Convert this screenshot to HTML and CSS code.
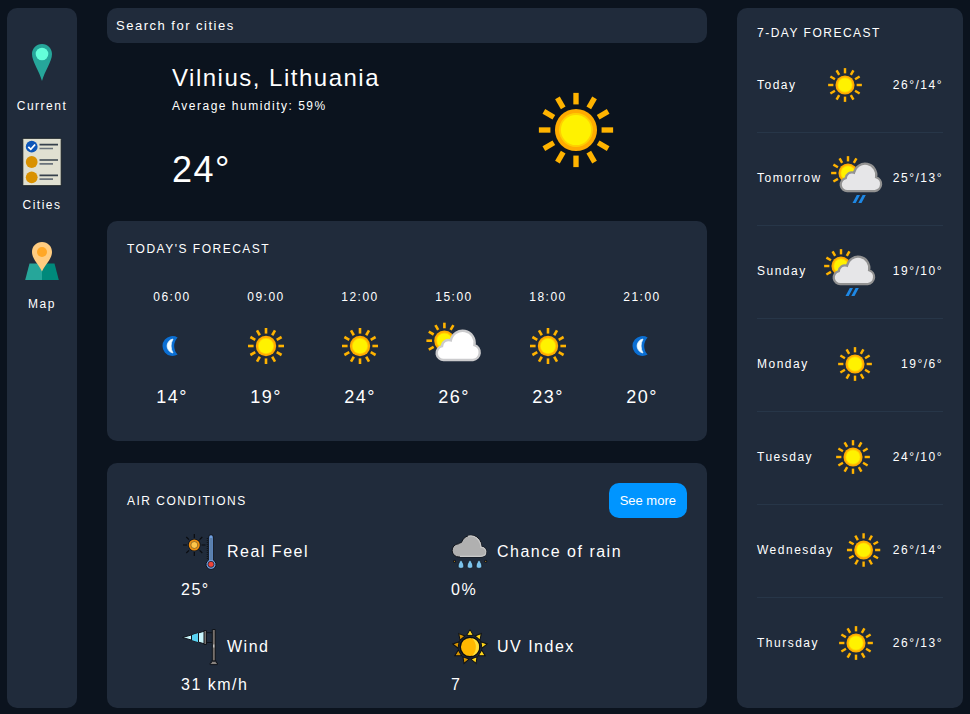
FILE: index.html
```html
<!DOCTYPE html>
<html lang="en">
<head>
<meta charset="utf-8">
<meta name="viewport" content="width=device-width, initial-scale=1">
<title>Weather</title>
<link rel="stylesheet" href="styles.css">
</head>
<body>
<svg class="sprite" aria-hidden="true">
  <symbol id="sun" viewBox="-32 -32 64 64">
    <g stroke="#ffb300" stroke-width="2.6">
      <path id="ray" d="M0 -12.4V-18"/>
      <use href="#ray" transform="rotate(30)"/><use href="#ray" transform="rotate(60)"/>
      <use href="#ray" transform="rotate(90)"/><use href="#ray" transform="rotate(120)"/>
      <use href="#ray" transform="rotate(150)"/><use href="#ray" transform="rotate(180)"/>
      <use href="#ray" transform="rotate(210)"/><use href="#ray" transform="rotate(240)"/>
      <use href="#ray" transform="rotate(270)"/><use href="#ray" transform="rotate(300)"/>
      <use href="#ray" transform="rotate(330)"/>
    </g>
    <circle r="10.2" fill="#ffab00"/><circle r="8.2" fill="#ffd000"/><circle r="7.3" fill="#fff200"/>
  </symbol>
  <symbol id="half-sun" viewBox="-32 -32 64 64">
    <g transform="translate(-9.6 -5.3)">
      <g stroke="#ffb300" stroke-width="2.6">
        <use href="#ray"/><use href="#ray" transform="rotate(30)"/>
        <use href="#ray" transform="rotate(240)"/><use href="#ray" transform="rotate(270)"/>
        <use href="#ray" transform="rotate(300)"/><use href="#ray" transform="rotate(330)"/>
      </g>
      <circle r="10.2" fill="#ffab00"/><circle r="8.2" fill="#ffd000"/><circle r="7.3" fill="#fff200"/>
    </g>
  </symbol>
  <symbol id="cloud" viewBox="-32 -32 64 64">
    <path stroke-width="2.4" d="M-10 14A7 7 0 0 1 -12 .2A6.600 6.600 0 0 1 -3.200 -5.600A12 12 0 0 1 20.400 -.8A7.600 7.600 0 0 1 19 14Z"/>
  </symbol>
  <symbol id="partly" viewBox="-32 -32 64 64">
    <use href="#half-sun" x="-32" y="-32" width="64" height="64"/>
    <use href="#cloud" x="-32" y="-32" width="64" height="64" fill="#fff" stroke="#cbcbcd"/>
  </symbol>
  <symbol id="showers" viewBox="-32 -32 64 64">
    <use href="#half-sun" x="-32" y="-32" width="64" height="64"/>
    <use href="#cloud" x="-32" y="-32" width="64" height="64" fill="#e6e6e8" stroke="#929292"/>
    <path d="M-4.800 26.600L-.2 18.200H3.200L-1.400 26.600ZM1.400 26.600L6 18.200H9.400L4.800 26.600Z" fill="#1e88e5"/>
  </symbol>
  <symbol id="moon" viewBox="-32 -32 64 64">
    <path d="M5.600 -8.600A10 10 0 1 0 5.600 8.600A12.500 12.500 0 0 1 5.600 -8.600Z" fill="#0b6fd3"/>
    <path d="M1 -7A7.100 7.100 0 0 0 1 7A14.500 14.500 0 0 1 1 -7Z" fill="#f2fcff" stroke="#f2fcff" stroke-width=".7"/>
  </symbol>
</svg>

<div class="app">
  <nav class="sidebar">
    <a class="nav-item" href="#current">
      <svg class="nav-icon" viewBox="0 0 50 50" aria-hidden="true">
        <path d="M25 6C19.200 6 15 10.600 15 16C15 23.500 22.500 33.500 25 43C27.500 33.500 35 23.500 35 16C35 10.600 30.800 6 25 6Z" fill="#26a69a"/>
        <circle cx="25" cy="16" r="6.300" fill="#64ffda"/>
      </svg>
      Current
    </a>
    <a class="nav-item" href="#cities">
      <svg class="nav-icon" viewBox="0 0 50 50" aria-hidden="true">
        <rect x="5.800" y="1.300" width="38.400" height="47.400" rx="1" fill="#e0e0d1" stroke="#1a2126"/>
        <circle cx="14.700" cy="9.700" r="5.900" fill="#0d56b8"/>
        <path d="M11.300 9.800l2.500 2.500 4.300-4.800" fill="none" stroke="#fff" stroke-width="1.800"/>
        <circle cx="14.700" cy="25" r="5.900" fill="#d99100"/><circle cx="14.700" cy="40.300" r="5.900" fill="#d99100"/>
        <path d="M22.500 7.700H41M22.500 23H41M22.500 38.300H41" stroke="#36414c" stroke-width="1.700"/>
        <path d="M22.500 11.500H36M22.500 26.800H36M22.500 42.100H36" stroke="#6a737b" stroke-width="1.700"/>
      </svg>
      Cities
    </a>
    <a class="nav-item" href="#map">
      <svg class="nav-icon" viewBox="0 0 50 50" aria-hidden="true">
        <path d="M12.500 27.500H25V44H8.200Z" fill="#26a69a"/>
        <path d="M25 27.500H37.500L41.800 44H25Z" fill="#00897b"/>
        <path d="M25 6C19.200 6 15 10.400 15 16C15 23 21.500 28 25 35.500C28.500 28 35 23 35 16C35 10.400 30.800 6 25 6Z" fill="#ffcc80"/>
        <circle cx="25" cy="16" r="5" fill="#ffa726"/>
      </svg>
      Map
    </a>
  </nav>

  <main class="main">
    <input class="search" type="text" placeholder="Search for cities" aria-label="Search for cities">

    <section class="now">
      <div class="now-text">
        <h1 class="city">Vilnius, Lithuania</h1>
        <p class="humidity">Average humidity: 59%</p>
        <p class="now-temp">24°</p>
      </div>
      <svg class="now-icon" aria-hidden="true"><use href="#sun"/></svg>
    </section>

    <section class="card today">
      <h2 class="title">TODAY'S FORECAST</h2>
      <div class="hours">
        <div class="hour"><span>06:00</span><svg class="hour-icon" aria-hidden="true"><use href="#moon"/></svg><span class="hour-temp">14°</span></div>
        <div class="hour"><span>09:00</span><svg class="hour-icon" aria-hidden="true"><use href="#sun"/></svg><span class="hour-temp">19°</span></div>
        <div class="hour"><span>12:00</span><svg class="hour-icon" aria-hidden="true"><use href="#sun"/></svg><span class="hour-temp">24°</span></div>
        <div class="hour"><span>15:00</span><svg class="hour-icon" aria-hidden="true"><use href="#partly"/></svg><span class="hour-temp">26°</span></div>
        <div class="hour"><span>18:00</span><svg class="hour-icon" aria-hidden="true"><use href="#sun"/></svg><span class="hour-temp">23°</span></div>
        <div class="hour"><span>21:00</span><svg class="hour-icon" aria-hidden="true"><use href="#moon"/></svg><span class="hour-temp">20°</span></div>
      </div>
    </section>

    <section class="card air">
      <div class="air-head">
        <h2 class="title">AIR CONDITIONS</h2>
        <button class="more" type="button">See more</button>
      </div>
      <div class="conditions">
        <div class="condition">
          <h3 class="condition-name">
            <svg class="condition-icon" viewBox="0 0 38 38" aria-hidden="true">
              <path d="M13.300 1V5M13.300 19V23M2 12H6M20.500 12H24.500M5.300 4L8 6.700M18.600 17.300L21.300 20M5.300 20L8 17.300M18.600 6.700L21.300 4" stroke="#0a0c10" stroke-width="1.200"/>
              <circle cx="13.300" cy="12" r="6.300" fill="#10141b"/><circle cx="13.300" cy="12" r="4.600" fill="#ffc64a" stroke="#f09010" stroke-width="1.800"/>
              <circle cx="13.300" cy="12" r="3.500" fill="none" stroke="#5a3a10" stroke-width=".6"/>
              <path d="M26.500 5V26" stroke="#10141b" stroke-width="1.500" stroke-dasharray="1 1"/>
              <path d="M27.700 27V4a2.300 2.300 0 0 1 4.600 0V27a5 5 0 1 1-4.600 0Z" fill="#6f9fe0" stroke="#10141b"/>
              <path d="M30 5V27" stroke="#56789f" stroke-width="1.600"/>
              <circle cx="30" cy="31.300" r="3" fill="#f04438" stroke="#172033" stroke-width=".8"/>
            </svg>
            Real Feel
          </h3>
          <p class="condition-value">25°</p>
        </div>
        <div class="condition">
          <h3 class="condition-name">
            <svg class="condition-icon" viewBox="0 0 38 38" aria-hidden="true">
              <path d="M8 24a6.300 6.300 0 0 1-.5-13.200A5.600 5.600 0 0 1 10.400 9.500A10.300 10.300 0 0 1 30.500 13.500A5.300 5.300 0 0 1 31 24Z" fill="#b0b0b0" stroke="#10141b"/>
              <path d="M17 3.300C24 1.300 29.500 7 30 14.500C33 14 36 17 34.500 21C33.500 23 31 23.300 29 23.300H9" fill="none" stroke="#c9c9c9" stroke-width="1.200"/>
              <g fill="#7cc3ec" stroke="#10141b" stroke-width=".8"><path id="drop" d="M10 26.500C8.500 29 6.700 31.500 7.200 33.500C7.800 36 12.200 36 12.800 33.500C13.300 31.500 11.500 29 10 26.500Z"/><use href="#drop" x="9"/><use href="#drop" x="18"/></g>
              <g fill="#10141b"><circle cx="3.500" cy="28.300" r="1.500"/><circle cx="34.700" cy="28.300" r="1.500"/></g>
              <g fill="#ad8120"><circle cx="3.500" cy="28.300" r=".6"/><circle cx="34.700" cy="28.300" r=".6"/></g>
            </svg>
            Chance of rain
          </h3>
          <p class="condition-value">0%</p>
        </div>
        <div class="condition">
          <h3 class="condition-name">
            <svg class="condition-icon" viewBox="0 0 38 38" aria-hidden="true">
              <path d="M24 4.700H32M24 14.500H32" stroke="#10141b"/>
              <path d="M31.300 1.500h3V33h-3Z" fill="#77706c" stroke="#10141b"/>
              <path d="M1.500 9.500L24 3V16Z" fill="#c9f5fb" stroke="#10141b"/>
              <path d="M10.500 7.200L17.500 5V14.200L10.500 12Z" fill="#58d1f2"/>
              <path d="M10.500 7V12.200M17.500 5V14" stroke="#10141b"/>
              <path d="M23 2.500h2.500v14H23Z" fill="#77706c" stroke="#10141b"/>
              <path d="M32.800 16.500v3" stroke="#dedede"/>
              <path d="M30.300 33.200h5v1.800h1.200v1.600h-7.400V35h1.200Z" fill="#8a8480" stroke="#10141b"/>
            </svg>
            Wind
          </h3>
          <p class="condition-value">31 km/h</p>
        </div>
        <div class="condition">
          <h3 class="condition-name">
            <svg class="condition-icon" viewBox="-19 -19 38 38" aria-hidden="true">
              <g fill="#ffd51a" stroke="#0c0f14" stroke-width="1">
                <path id="flare" d="M0 -17.500L3.300 -11.600H-3.300Z"/>
                <use href="#flare" transform="rotate(40)"/><use href="#flare" transform="rotate(80)"/>
                <use href="#flare" transform="rotate(120)"/><use href="#flare" transform="rotate(160)"/>
                <g fill="#d99600"><use href="#flare" transform="rotate(200)"/><use href="#flare" transform="rotate(240)"/><use href="#flare" transform="rotate(280)"/><use href="#flare" transform="rotate(320)"/></g>
              </g>
              <circle r="9.800" fill="#ffb800" stroke="#0c0f14" stroke-width="1.500"/>
              <path d="M2 -8.800A9 9 0 0 1 2 8.800A12 12 0 0 0 2 -8.800Z" fill="#ffdf38"/>
            </svg>
            UV Index
          </h3>
          <p class="condition-value">7</p>
        </div>
      </div>
    </section>
  </main>

  <aside class="card week">
    <h2 class="title">7-DAY FORECAST</h2>
    <ul class="days">
      <li class="day"><span>Today</span><svg class="day-icon" aria-hidden="true"><use href="#sun"/></svg><span>26°/14°</span></li>
      <li class="day"><span>Tomorrow</span><svg class="day-icon" aria-hidden="true"><use href="#showers"/></svg><span>25°/13°</span></li>
      <li class="day"><span>Sunday</span><svg class="day-icon" aria-hidden="true"><use href="#showers"/></svg><span>19°/10°</span></li>
      <li class="day"><span>Monday</span><svg class="day-icon" aria-hidden="true"><use href="#sun"/></svg><span>19°/6°</span></li>
      <li class="day"><span>Tuesday</span><svg class="day-icon" aria-hidden="true"><use href="#sun"/></svg><span>24°/10°</span></li>
      <li class="day"><span>Wednesday</span><svg class="day-icon" aria-hidden="true"><use href="#sun"/></svg><span>26°/14°</span></li>
      <li class="day"><span>Thursday</span><svg class="day-icon" aria-hidden="true"><use href="#sun"/></svg><span>26°/13°</span></li>
    </ul>
  </aside>
</div>
</body>
</html>
```
FILE: styles.css
```css
* {
  box-sizing: border-box;
}

body {
  margin: 0;
  background: #0b131e;
  color: #fff;
  font-family: Arial, "Liberation Sans", sans-serif;
  font-size: 12px;
  line-height: 16px;
  letter-spacing: 0.125em;
}

h1, h2, h3, p, ul {
  margin: 0;
  padding: 0;
  font-weight: 400;
}

.sprite {
  position: absolute;
  width: 0;
  height: 0;
}

.app {
  display: grid;
  grid-template-columns: 70px minmax(0, 1fr) 226px;
  gap: 30px;
  min-height: 100vh;
  padding: 8px 7px 6px;
}

.sidebar,
.card {
  background: #202b3b;
  border-radius: 10px;
}

.sidebar {
  display: flex;
  flex-direction: column;
  gap: 23px;
  padding-top: 30px;
}

.nav-item {
  display: flex;
  flex-direction: column;
  align-items: center;
  gap: 10px;
  color: inherit;
  text-decoration: none;
}

.nav-icon {
  width: 50px;
  height: 50px;
}

.main {
  display: flex;
  flex-direction: column;
}

.search {
  width: 100%;
  height: 35px;
  padding: 0 9px;
  border: 0;
  border-radius: 10px;
  background: #202b3b;
  color: #fff;
  font: inherit;
  font-size: 13px;
  letter-spacing: inherit;
}

.search::placeholder {
  color: #fff;
  opacity: 1;
}

.now {
  display: flex;
  justify-content: space-between;
  align-items: center;
  padding: 21px 65px 25px;
}

.now-text {
  padding-bottom: 6px;
}

.city {
  font-size: 24px;
  line-height: 28px;
}

.humidity {
  margin-top: 6px;
}

.now-temp {
  margin-top: 36px;
  font-size: 36px;
  line-height: 40px;
}

.now-icon {
  width: 132px;
  height: 132px;
}

.card {
  padding: 20px;
}

.title {
  font-size: 12px;
}

.today {
  margin-bottom: 22px;
  padding-bottom: 34px;
}

.hours {
  display: grid;
  grid-template-columns: repeat(6, 1fr);
  margin: 32px -2px 0;
}

.hour {
  display: flex;
  flex-direction: column;
  align-items: center;
  gap: 9px;
}

.hour-icon {
  width: 64px;
  height: 64px;
}

.hour-temp {
  font-size: 18px;
  line-height: 20px;
}

.air {
  flex: 1;
  padding-bottom: 13px;
}

.air-head {
  display: flex;
  justify-content: space-between;
  align-items: center;
}

.more {
  height: 35px;
  padding: 0 11px;
  border: 0;
  border-radius: 10px;
  background: #0095ff;
  color: #fff;
  font: inherit;
  font-size: 13px;
}

.conditions {
  display: grid;
  grid-template-columns: 1fr 1fr;
  gap: 28px 34px;
  margin-top: 15px;
  padding-left: 54px;
  font-size: 16px;
  line-height: 20px;
}

.condition-name {
  display: flex;
  align-items: center;
  gap: 8px;
  font-size: 16px;
}

.condition-icon {
  width: 38px;
  height: 38px;
}

.condition-value {
  margin-top: 9px;
}

.week {
  padding-block: 17px 16px;
}

.days {
  margin-top: -1px;
  list-style: none;
}

.day {
  display: flex;
  justify-content: space-between;
  align-items: center;
  height: 93px;
  padding-bottom: 2px;
  border-bottom: 1px solid #273648;
}

.day:last-child {
  border-bottom-color: transparent;
}

.day-icon {
  width: 60px;
  height: 60px;
}
```
